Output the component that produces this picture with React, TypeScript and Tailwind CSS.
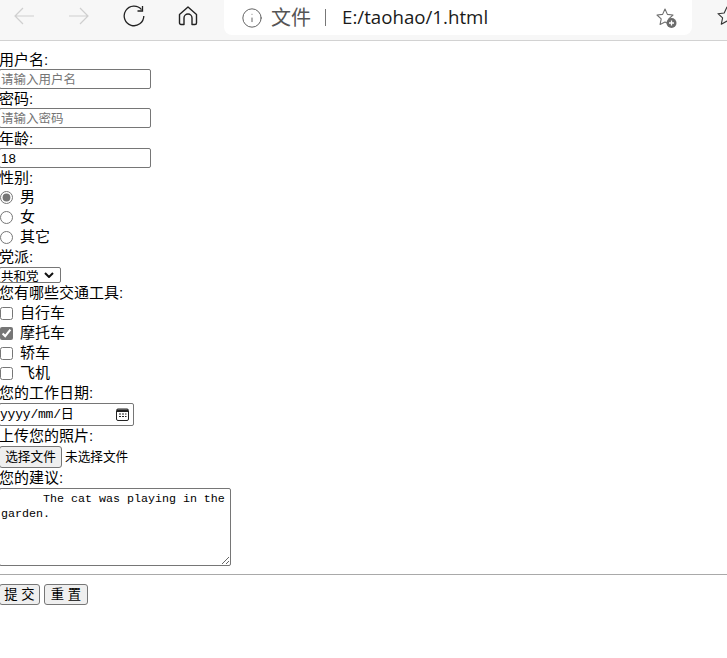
import { Info } from 'lucide-react';

const cjk = "font-['Liberation_Sans','Noto_Sans_CJK_SC',sans-serif]";

function FieldLabel({ text, className = '' }: { text: string; className?: string }) {
  return <div className={`h-[18px] leading-[18px] text-[15px] text-black ${className}`}>{text}</div>;
}

function TextField({ placeholder, value }: { placeholder?: string; value?: string }) {
  return (
    <input
      placeholder={placeholder}
      defaultValue={value}
      className="block w-[152px] h-[20px] border border-[#767676] rounded-[2px] px-[1px] text-[13.33px] text-black placeholder:text-[12.5px] placeholder:text-[#757575] bg-white"
    />
  );
}

function OptionRow({ type, name, text, checked, className = '' }: { type: string; name: string; text: string; checked?: boolean; className?: string }) {
  return (
    <label className={`flex items-center h-[20px] text-[15px] text-black ${className}`}>
      <input
        type={type}
        name={name}
        defaultChecked={checked}
        className="ml-[1px] w-[13px] h-[13px] accent-[#767676] shrink-0"
      />
      <span className="ml-[7px]">{text}</span>
    </label>
  );
}

function StarPlus() {
  return (
    <svg width="24" height="24" viewBox="0 0 24 24" fill="none">
      <path d="M10 3l2.400 5.400 5.600.6-4.200 3.800 1.100 5.600L10 16l-4.900 2.400 1.100-5.600L2 9l5.600-.6z" stroke="#6f6f6f" strokeWidth="1.100" strokeLinejoin="round" />
      <circle cx="16.500" cy="17" r="5" fill="#6b6b6b" />
      <path d="M16.500 14.500v5M14 17h5" stroke="#fff" strokeWidth="1.300" />
    </svg>
  );
}

export default function App() {
  return (
    <div className={`w-[727px] h-[658px] overflow-hidden bg-white ${cjk}`}>
      {/* browser toolbar */}
      <div className="h-[41px] bg-[#f7f7f7] border-b border-[#d2d2d2] flex items-start">
        <div className="flex items-center h-[31px] pl-[14px] shrink-0">
          <svg width="20" height="18" viewBox="0 0 20 18" fill="none" stroke="#cfcfcf" strokeWidth="1.200">
            <path d="M20 9H1M9 1L1 9l8 8" />
          </svg>
          <svg width="20" height="18" viewBox="0 0 20 18" fill="none" stroke="#cfcfcf" strokeWidth="1.200" className="ml-[35px]">
            <path d="M0 9h19M11 1l8 8-8 8" />
          </svg>
          <svg width="22" height="22" viewBox="0 0 22 22" fill="none" stroke="#222" strokeWidth="1.300" className="ml-[34px]">
            <path d="M18.500 4.600A9.800 9.800 0 1 0 20.800 11" />
            <path d="M19.500 1v5h-5" />
          </svg>
          <svg width="20" height="20" viewBox="0 0 20 20" fill="none" stroke="#222" strokeWidth="1.400" className="ml-[33px]">
            <path d="M1.500 8.500L10 1l8.500 7.500V17a1.500 1.500 0 0 1-1.500 1.500h-3V12a4 4 0 0 0-8 0v6.500H3A1.500 1.500 0 0 1 1.500 17z" strokeLinejoin="round" />
          </svg>
        </div>
        <div className="ml-[26px] w-[468px] h-[35px] shrink-0 bg-white rounded-b-[8px] flex items-center pl-[17px] pr-[13px]">
          <Info size={22} strokeWidth={1} className="text-[#555] shrink-0" />
          <span className="ml-[8px] text-[20px] text-[#555]">文件</span>
          <span className="ml-[14px] w-[1px] h-[17px] bg-[#777]" />
          <span className="ml-[16px] text-[18.700px] text-[#1a1a1a] font-['Open_Sans','Noto_Sans',sans-serif]">E:/taohao/1.html</span>
          <span className="ml-auto"><StarPlus /></span>
        </div>
        <svg width="22" height="24" viewBox="0 0 22 24" fill="none" className="ml-[23px] mt-[4px] shrink-0">
          <path d="M12 3l2.800 6 6.200.7-4.600 4.200 1.300 6.300L12 17l-5.700 3.200 1.300-6.300L3 9.700 9.200 9z" stroke="#333" strokeWidth="1.100" strokeLinejoin="round" />
        </svg>
      </div>

      {/* form */}
      <form className="-ml-[1px] pt-[10px]">
        <FieldLabel text="用户名:" />
        <TextField placeholder="请输入用户名" />
        <FieldLabel text="密码:" className="mt-[1px]" />
        <TextField placeholder="请输入密码" />
        <FieldLabel text="年龄:" className="mt-[2px]" />
        <TextField value="18" />
        <FieldLabel text="性别:" className="mt-[1px]" />
        <OptionRow type="radio" name="sex" text="男" checked />
        <OptionRow type="radio" name="sex" text="女" />
        <OptionRow type="radio" name="sex" text="其它" />
        <FieldLabel text="党派:" className="mt-[1px]" />
        <div className="relative w-[62px] h-[16px] mt-[1px]">
          <select className="block appearance-none w-full h-full border border-[#767676] rounded-[2px] pl-[1px] text-[12.5px] text-black bg-white">
            <option>共和党</option>
          </select>
          <svg width="10" height="6" viewBox="0 0 10 6" fill="none" stroke="#111" strokeWidth="2" className="absolute left-[45px] top-[5px] pointer-events-none">
            <path d="M1 1l4 4 4-4" />
          </svg>
        </div>
        <FieldLabel text="您有哪些交通工具:" className="mt-[1px]" />
        <OptionRow type="checkbox" name="car" text="自行车" className="mt-[1px]" />
        <OptionRow type="checkbox" name="car" text="摩托车" checked />
        <OptionRow type="checkbox" name="car" text="轿车" />
        <OptionRow type="checkbox" name="car" text="飞机" />
        <FieldLabel text="您的工作日期:" className="mt-[1px]" />
        <div className="flex items-center w-[135px] h-[23px] mt-[1px] border border-[#767676] rounded-[2px] text-black">
          <span className="font-['Liberation_Mono','Noto_Sans_CJK_SC',monospace] text-[13px] tracking-[-0.2px]">yyyy/mm/日</span>
          <svg width="15" height="15" viewBox="0 0 15 15" fill="none" className="ml-auto mr-[3px]">
            <rect x="1.500" y="2" width="12" height="11.500" rx="1.500" stroke="#222" />
            <rect x="2" y="2.500" width="11" height="2.500" fill="#222" />
            <path d="M4 7h2M7 7h2M10 7h1.500M4 9.500h2M7 9.500h2M10 9.500h1.500" stroke="#222" />
          </svg>
        </div>
        <FieldLabel text="上传您的照片:" className="mt-[1px]" />
        <div className="flex items-center h-[22px] mt-[1px] text-[12.67px] text-black">
          <button type="button" className="w-[63px] h-[22px] border border-[#767676] rounded-[3px] bg-[#efefef]">选择文件</button>
          <span className="ml-[3px]">未选择文件</span>
        </div>
        <FieldLabel text="您的建议:" className="mt-[1px]" />
        <textarea
          className="block w-[232px] h-[78px] mt-[1px] border border-[#767676] rounded-[2px] px-[1px] py-[3px] font-['Liberation_Mono',monospace] text-[11.67px] leading-[15px] text-black"
          defaultValue="      The cat was playing in the garden."
        />
      </form>
      <hr className="mt-[8px] border-t border-[#a9a9a9]" />
      <div className="-ml-[1px] mt-[9px] flex gap-[4px]">
        <button type="button" className="w-[41px] h-[21px] border border-[#767676] rounded-[3px] bg-[#efefef] text-[13.33px] text-black">提 交</button>
        <button type="button" className="w-[44px] h-[21px] border border-[#767676] rounded-[3px] bg-[#efefef] text-[13.33px] text-black">重 置</button>
      </div>
    </div>
  );
}
